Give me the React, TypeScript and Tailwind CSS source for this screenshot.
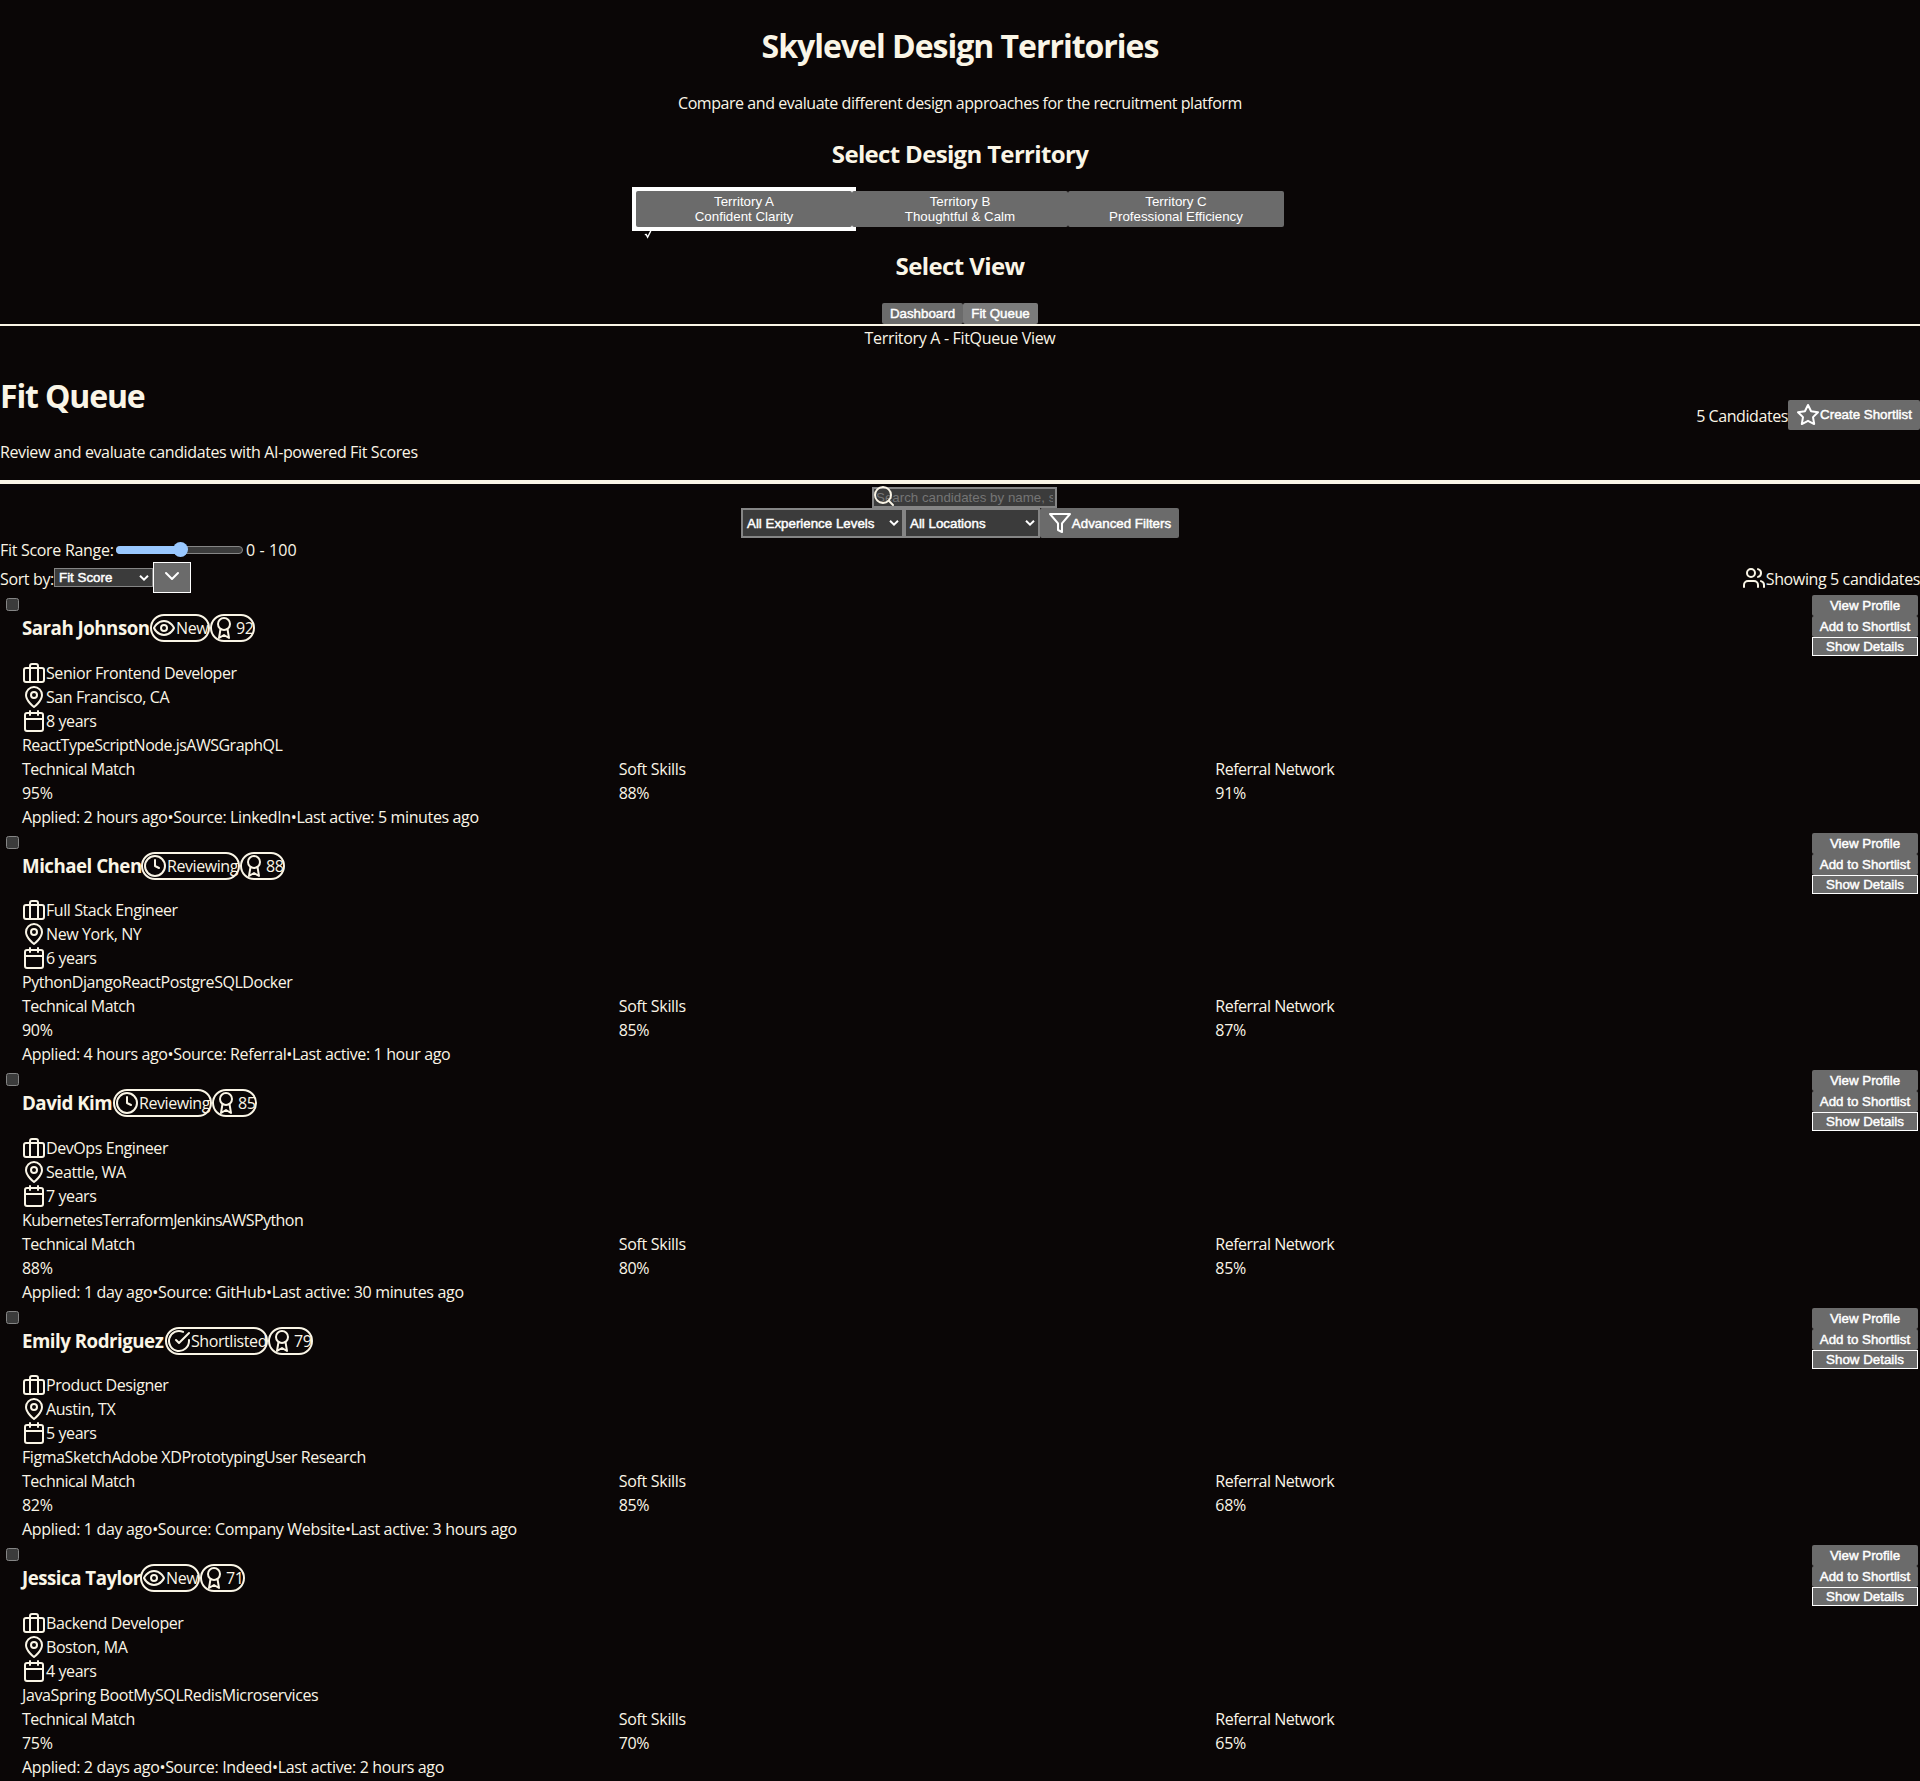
import React from "react";

function Icon({ children, className = "" }: { children: React.ReactNode; className?: string }) {
  return (
    <svg viewBox="0 0 24 24" fill="none" stroke="currentColor" strokeWidth="2" strokeLinecap="round" strokeLinejoin="round" className={"block size-6 shrink-0 " + className}>
      {children}
    </svg>
  );
}

const icons = {
  New: (
    <>
      <path d="M2 12s3-7 10-7 10 7 10 7-3 7-10 7-10-7-10-7Z" />
      <circle cx="12" cy="12" r="3" />
    </>
  ),
  Reviewing: (
    <>
      <circle cx="12" cy="12" r="10" />
      <path d="M12 6v6l4 2" />
    </>
  ),
  Shortlisted: (
    <>
      <path d="M22 11.08V12a10 10 0 1 1-5.93-9.14" />
      <path d="m9 11 3 3L22 4" />
    </>
  ),
  award: (
    <>
      <circle cx="12" cy="8" r="6" />
      <path d="M15.477 12.89 17 22l-5-3-5 3 1.523-9.11" />
    </>
  ),
  briefcase: (
    <>
      <rect x="2" y="7" width="20" height="14" rx="2" />
      <path d="M16 21V5a2 2 0 0 0-2-2h-4a2 2 0 0 0-2 2v16" />
    </>
  ),
  pin: (
    <>
      <path d="M20 10c0 6-8 12-8 12s-8-6-8-12a8 8 0 0 1 16 0Z" />
      <circle cx="12" cy="10" r="3" />
    </>
  ),
  calendar: (
    <>
      <rect x="3" y="4" width="18" height="18" rx="2" />
      <path d="M16 2v4M8 2v4M3 10h18" />
    </>
  ),
};

type Candidate = {
  name: string;
  nameWidth: string;
  status: "New" | "Reviewing" | "Shortlisted";
  statusWidth: string;
  score: number;
  role: string;
  place: string;
  years: number;
  skills: string[];
  skillsTracking: string;
  match: [number, number, number];
  applied: string;
  source: string;
  active: string;
  metaTracking: string;
};

const candidates: Candidate[] = [
  { name: "Sarah Johnson", nameWidth: "w-[128px]", status: "New", statusWidth: "w-[60px]", score: 92, role: "Senior Frontend Developer", place: "San Francisco, CA", years: 8, skills: ["React", "TypeScript", "Node.js", "AWS", "GraphQL"], skillsTracking: "tracking-[-0.51px]", match: [95, 88, 91], applied: "2 hours ago", source: "LinkedIn", active: "5 minutes ago", metaTracking: "tracking-[-0.37px]" },
  { name: "Michael Chen", nameWidth: "w-[119px]", status: "Reviewing", statusWidth: "w-[99px]", score: 88, role: "Full Stack Engineer", place: "New York, NY", years: 6, skills: ["Python", "Django", "React", "PostgreSQL", "Docker"], skillsTracking: "tracking-[-0.46px]", match: [90, 85, 87], applied: "4 hours ago", source: "Referral", active: "1 hour ago", metaTracking: "tracking-[-0.37px]" },
  { name: "David Kim", nameWidth: "w-[91px]", status: "Reviewing", statusWidth: "w-[99px]", score: 85, role: "DevOps Engineer", place: "Seattle, WA", years: 7, skills: ["Kubernetes", "Terraform", "Jenkins", "AWS", "Python"], skillsTracking: "tracking-[-0.58px]", match: [88, 80, 85], applied: "1 day ago", source: "GitHub", active: "30 minutes ago", metaTracking: "tracking-[-0.33px]" },
  { name: "Emily Rodriguez", nameWidth: "w-[143px]", status: "Shortlisted", statusWidth: "w-[103px]", score: 79, role: "Product Designer", place: "Austin, TX", years: 5, skills: ["Figma", "Sketch", "Adobe XD", "Prototyping", "User Research"], skillsTracking: "tracking-[-0.42px]", match: [82, 85, 68], applied: "1 day ago", source: "Company Website", active: "3 hours ago", metaTracking: "tracking-[-0.34px]" },
  { name: "Jessica Taylor", nameWidth: "w-[118px]", status: "New", statusWidth: "w-[60px]", score: 71, role: "Backend Developer", place: "Boston, MA", years: 4, skills: ["Java", "Spring Boot", "MySQL", "Redis", "Microservices"], skillsTracking: "tracking-[-0.39px]", match: [75, 70, 65], applied: "2 days ago", source: "Indeed", active: "2 hours ago", metaTracking: "tracking-[-0.34px]" },
];

const face = "whitespace-nowrap font-['Liberation_Sans',sans-serif] text-[13.333px] leading-[15px] tracking-normal text-white";
const semi = " [-webkit-text-stroke:0.45px_white]";
const btn = "flex items-center justify-center rounded-[2px] bg-[#6b6b6b] " + face;

function Chevron({ className }: { className: string }) {
  return (
    <svg viewBox="0 0 10 6" fill="none" stroke="white" strokeWidth="2" className={"h-1.5 w-2.5 shrink-0 " + className}>
      <path d="M1 0.8 5 4.6 9 0.8" />
    </svg>
  );
}

function Select({ label, className }: { label: string; className: string }) {
  return (
    <div className={"flex items-center justify-between border-[#858585] bg-[#3b3b3b] pl-1 " + face + semi + " " + className}>
      <span>{label}</span>
      <Chevron className="mr-[3px]" />
    </div>
  );
}

function Card({ c }: { c: Candidate }) {
  return (
    <div className="flex h-[237.5px] items-start p-0.5">
      <div className="mt-[3px] mr-[3px] ml-1 size-[13px] shrink-0 rounded-[2.5px] border border-[#858585] bg-[#3b3b3b]" />
      <div className="min-w-0 flex-1">
        <div className="flex h-[65.5px] items-center pt-[0.8px]">
          <h3 className={"text-[18.72px] leading-[28px] font-bold tracking-[-0.5px] " + c.nameWidth}>{c.name}</h3>
          <div className={"flex h-7 items-center rounded-full border-2 border-[#faf5e6] " + c.statusWidth}>
            <Icon>{icons[c.status]}</Icon>
            <span>{c.status}</span>
          </div>
          <div className="flex h-7 w-[45px] items-center rounded-full border-2 border-[#faf5e6] tracking-[-0.3px]">
            <Icon>{icons.award}</Icon>
            <span>{c.score}</span>
          </div>
        </div>
        <div className="flex"><Icon>{icons.briefcase}</Icon>{c.role}</div>
        <div className="flex"><Icon>{icons.pin}</Icon>{c.place}</div>
        <div className="flex"><Icon>{icons.calendar}</Icon>{c.years} years</div>
        <div className={"flex " + c.skillsTracking}>{c.skills.map((s) => <span key={s}>{s}</span>)}</div>
        <div className="grid grid-cols-3">
          {["Technical Match", "Soft Skills", "Referral Network"].map((m, i) => (
            <div key={m}>
              <div className={m === "Soft Skills" ? "tracking-[-0.3px]" : "tracking-[-0.51px]"}>{m}</div>
              <div className="tracking-[-0.3px]">{c.match[i]}%</div>
            </div>
          ))}
        </div>
        <div className={"flex " + c.metaTracking}>
          <span>Applied: {c.applied}</span><span>•</span><span>Source: {c.source}</span><span>•</span><span>Last active: {c.active}</span>
        </div>
      </div>
      <div className="flex w-[106px] shrink-0 flex-col">
        <div className={btn + semi + " h-[21px]"}>View Profile</div>
        <div className={btn + semi + " h-[21px]"}>Add to Shortlist</div>
        <div className={btn + semi + " h-[19px] rounded-none border border-white"}>Show Details</div>
      </div>
    </div>
  );
}

export default function App() {
  return (
    <div className="h-[1781px] overflow-hidden bg-[#0a0606] font-['Open_Sans','Noto_Sans',sans-serif] text-base leading-6 tracking-[-0.42px] whitespace-nowrap text-[#faf5e6]">
      <header className="flex flex-col items-center border-b-2 border-[#faf5e6]">
        <h1 className="mt-[22.4px] mb-[20.4px] text-[32px] leading-[48px] font-bold tracking-[-1.02px]">Skylevel Design Territories</h1>
        <p className="tracking-[-0.45px]">Compare and evaluate different design approaches for the recruitment platform</p>
        <h2 className="mt-[21px] mb-[19px] text-2xl leading-9 font-bold tracking-[-0.67px]">Select Design Territory</h2>
        <div className="grid h-9 grid-cols-[216px_216px_216px]">
          <div className="relative bg-white shadow-[0_0_0_4px_#fff]">
            <div className={btn + " h-9 flex-col"}>
              <span>Territory A</span><span>Confident Clarity</span>
            </div>
            <svg viewBox="0 0 8 8" fill="none" stroke="white" strokeWidth="1.4" className="absolute top-10 left-2 size-2">
              <path d="M0.8 3.6 2.2 3.4 3.6 6.2 6.8 0" />
            </svg>
          </div>
          <div className={btn + " relative flex-col"}><span>Territory B</span><span>Thoughtful &amp; Calm</span></div>
          <div className={btn + " relative flex-col"}><span>Territory C</span><span>Professional Efficiency</span></div>
        </div>
        <h2 className="mt-[21px] mb-[19px] text-2xl leading-9 font-bold tracking-[-0.6px]">Select View</h2>
        <div className="flex">
          <div className={btn + semi + " h-[21px] w-[81px]"}>Dashboard</div>
          <div className={btn + semi + " h-[21px] w-[75px] bg-[#7b7b7b]!"}>Fit Queue</div>
        </div>
      </header>
      <div className="pt-px pb-0 text-center leading-[23px] tracking-[-0.33px]">Territory A - FitQueue View</div>

      <section className="flex h-[134px] items-center justify-between border-b-4 border-[#faf5e6]">
        <div>
          <h1 className="mt-[22.4px] mb-[20.4px] text-[32px] leading-[48px] font-bold tracking-[-1.15px]">Fit Queue</h1>
          <p className="mb-4 tracking-[-0.38px]">Review and evaluate candidates with AI-powered Fit Scores</p>
        </div>
        <div className="flex items-center">
          <span className="pt-0.5">5 Candidates</span>
          <div className={btn + semi + " h-[30px] w-[132px]"}>
            <Icon><path d="m12 2 3.09 6.26L22 9.27l-5 4.87 1.18 6.88L12 17.77l-6.18 3.25L7 14.14 2 9.27l6.91-1.01L12 2z" /></Icon>
            Create Shortlist
          </div>
        </div>
      </section>

      <section>
        <div className="flex h-[24.4px] justify-center pt-[3px]">
          <div className="relative ml-[9px] h-[21px] w-[185px]">
            <input
              type="text"
              placeholder="Search candidates by name, skills, or location..."
              className="block h-[21px] w-[185px] border-2 border-[#858585] bg-[#3b3b3b] px-0.5 py-px font-['Liberation_Sans',sans-serif] text-[13.333px] leading-[15px] tracking-normal text-white placeholder:text-[#757575]"
            />
            <Icon className="absolute -top-[3px] left-0 text-[#faf5e6]">
              <circle cx="11" cy="11" r="8" />
              <path d="m21 21-4.35-4.35" />
            </Icon>
          </div>
        </div>
        <div className="flex h-[30px] justify-center">
          <Select label="All Experience Levels" className="w-[163px] border-2" />
          <Select label="All Locations" className="w-[136px] border-2" />
          <div className={btn + semi + " w-[139px]"}>
            <Icon><path d="M22 3H2l8 9.46V19l4 2v-8.54L22 3z" /></Icon>
            Advanced Filters
          </div>
        </div>
        <div className="flex h-6 items-center">
          <span className="w-[116px] tracking-[-0.3px]">Fit Score Range:</span>
          <div className="relative h-2 w-[127px] rounded-full border border-[#858585] bg-[#3b3b3b]">
            <div className="absolute -top-px -left-px h-2 w-16 rounded-full bg-[#99c8ff]" />
            <div className="absolute -top-[5px] left-[56px] size-[15px] rounded-full bg-[#99c8ff]" />
          </div>
          <span className="ml-[3px] tracking-[0.1px]">0 - 100</span>
        </div>
        <div className="flex h-[31px] items-center justify-between">
          <div className="flex items-center">
            <span className="w-[54px] pt-[2px] tracking-[-0.36px]">Sort by:</span>
            <Select label="Fit Score" className="h-[19px] w-[99px] border" />
            <div className={btn + " h-[31px] w-[38px] rounded-none border border-white pb-[3px]"}>
              <Icon><path d="m6 9 6 6 6-6" /></Icon>
            </div>
          </div>
          <div className="flex items-center">
            <Icon>
              <path d="M16 21v-2a4 4 0 0 0-4-4H6a4 4 0 0 0-4 4v2" />
              <circle cx="9" cy="7" r="4" />
              <path d="M22 21v-2a4 4 0 0 0-3-3.87M16 3.13a4 4 0 0 1 0 7.75" />
            </Icon>
            <span className="pt-0.5 tracking-[-0.38px]">Showing 5 candidates</span>
          </div>
        </div>
      </section>

      <main>
        {candidates.map((c) => <Card key={c.name} c={c} />)}
      </main>
    </div>
  );
}
